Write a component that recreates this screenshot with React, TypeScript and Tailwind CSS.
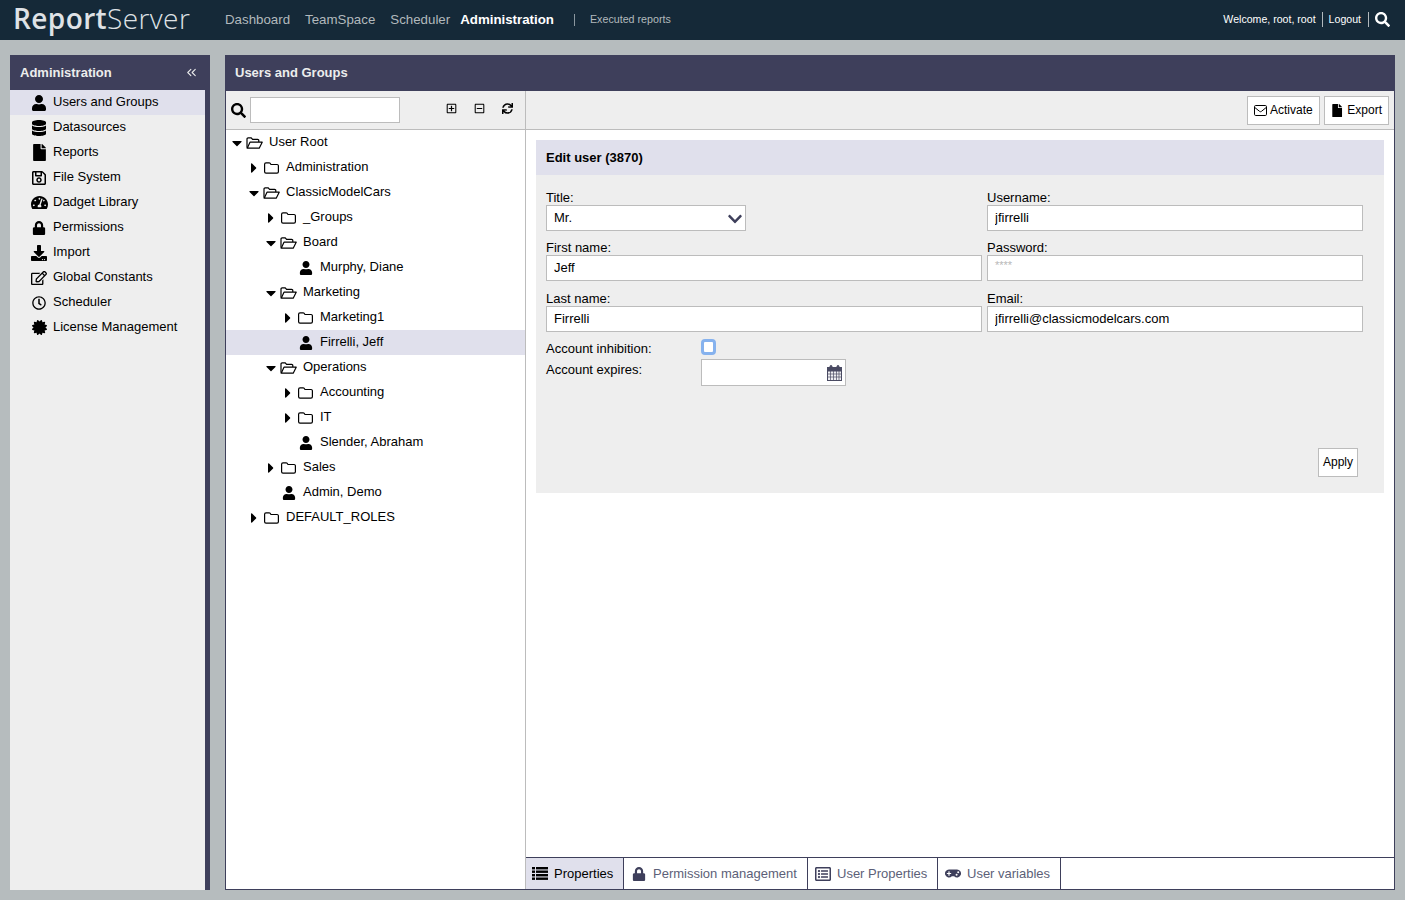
import type { ReactNode } from 'react';
import { ChevronsLeft } from 'lucide-react';
import {
  FaCaretDown,
  FaCaretRight,
  FaCertificate,
  FaChevronDown,
  FaDatabase,
  FaDownload,
  FaFile,
  FaGamepad,
  FaLock,
  FaRegClock,
  FaRegEdit,
  FaRegListAlt,
  FaRegMinusSquare,
  FaRegPlusSquare,
  FaRegSave,
  FaSearch,
  FaSync,
  FaTachometerAlt,
  FaUser,
} from 'react-icons/fa';

const NAV_ITEMS = ['Dashboard', 'TeamSpace', 'Scheduler'];

function FolderClosed() {
  return (
    <svg width="15" height="12" viewBox="0 0 15 12" fill="none" stroke="currentColor" strokeWidth="1.2">
      <path d="M2 .8h3.2a1 1 0 0 1 .8.4l1 1.3h6a1.3 1.3 0 0 1 1.4 1.3v6a1.4 1.4 0 0 1-1.4 1.4H2A1.4 1.4 0 0 1 .6 9.800V2.200A1.400 1.400 0 0 1 2 .8z" />
    </svg>
  );
}

function FolderOpen() {
  return (
    <svg width="17" height="12" viewBox="0 0 17 12" fill="none" stroke="currentColor" strokeWidth="1.2">
      <path d="M1 10.800V2a1.200 1.200 0 0 1 1.200-1.200h3l1.400 1.600h5a1.200 1.200 0 0 1 1.200 1.200v1.500" />
      <path d="M1.200 11.200 4 5.200h12.200l-3 6H1.200z" strokeLinejoin="round" />
    </svg>
  );
}

function ListIcon() {
  return (
    <svg width="16" height="13" viewBox="0 0 16 13" fill="currentColor">
      {[0, 3.5, 7, 10.500].map((y) => (
        <g key={y}>
          <rect x="0" y={y} width="3" height="2.400" />
          <rect x="4" y={y} width="12" height="2.400" />
        </g>
      ))}
    </svg>
  );
}

function CalendarIcon() {
  return (
    <svg width="15" height="16" viewBox="0 0 15 16" fill="none" stroke="#4a4b63" strokeWidth="1">
      <rect x=".5" y="2.500" width="14" height="13" fill="#eeeef2" />
      <rect x=".5" y="2.500" width="14" height="3.500" fill="#4a4b63" />
      <path d="M.5 9h14M.5 12h14M3.500 6v9.500M6.500 6v9.500M9.500 6v9.500M12 6v9.500" strokeWidth=".7" />
      <rect x="3" y=".5" width="2" height="4" rx="1" fill="#4a4b63" />
      <rect x="10" y=".5" width="2" height="4" rx="1" fill="#4a4b63" />
    </svg>
  );
}

function EnvelopeIcon() {
  return (
    <svg width="13" height="11" viewBox="0 0 13 11" fill="none" stroke="currentColor" strokeWidth="1">
      <rect x=".5" y=".5" width="12" height="10" rx="1.200" />
      <path d="M.8 2.500 5.500 6.300a1.500 1.500 0 0 0 2 0l4.700-3.800" />
    </svg>
  );
}

const SIDE_ITEMS: { label: string; icon: ReactNode; active?: boolean }[] = [
  { label: 'Users and Groups', icon: <FaUser size={16} />, active: true },
  { label: 'Datasources', icon: <FaDatabase size={16} /> },
  { label: 'Reports', icon: <FaFile size={17} /> },
  { label: 'File System', icon: <FaRegSave size={16} /> },
  { label: 'Dadget Library', icon: <FaTachometerAlt size={17} /> },
  { label: 'Permissions', icon: <FaLock size={14} /> },
  { label: 'Import', icon: <FaDownload size={16} /> },
  { label: 'Global Constants', icon: <FaRegEdit size={16} /> },
  { label: 'Scheduler', icon: <FaRegClock size={14} /> },
  { label: 'License Management', icon: <FaCertificate size={15} /> },
];

type TreeNode = {
  label: string;
  depth: number;
  kind: 'open' | 'closed' | 'user';
  selected?: boolean;
};

const TREE: TreeNode[] = [
  { label: 'User Root', depth: 0, kind: 'open' },
  { label: 'Administration', depth: 1, kind: 'closed' },
  { label: 'ClassicModelCars', depth: 1, kind: 'open' },
  { label: '_Groups', depth: 2, kind: 'closed' },
  { label: 'Board', depth: 2, kind: 'open' },
  { label: 'Murphy, Diane', depth: 3, kind: 'user' },
  { label: 'Marketing', depth: 2, kind: 'open' },
  { label: 'Marketing1', depth: 3, kind: 'closed' },
  { label: 'Firrelli, Jeff', depth: 3, kind: 'user', selected: true },
  { label: 'Operations', depth: 2, kind: 'open' },
  { label: 'Accounting', depth: 3, kind: 'closed' },
  { label: 'IT', depth: 3, kind: 'closed' },
  { label: 'Slender, Abraham', depth: 3, kind: 'user' },
  { label: 'Sales', depth: 2, kind: 'closed' },
  { label: 'Admin, Demo', depth: 2, kind: 'user' },
  { label: 'DEFAULT_ROLES', depth: 1, kind: 'closed' },
];

const TABS: { label: string; icon: ReactNode; active?: boolean; width: string }[] = [
  { label: 'Properties', icon: <ListIcon />, active: true, width: 'w-[98px] pl-[6px]' },
  { label: 'Permission management', icon: <FaLock size={14} />, width: 'w-[184px] pl-[7px]' },
  { label: 'User Properties', icon: <FaRegListAlt size={16} />, width: 'w-[130px] pl-[7px]' },
  { label: 'User variables', icon: <FaGamepad size={17} />, width: 'w-[123px] pl-[7px]' },
];

function TreeRow({ node }: { node: TreeNode }) {
  return (
    <div
      className={`flex h-[25px] items-center ${node.selected ? 'bg-[#e0e0ec]' : ''}`}
      style={{ paddingLeft: 4 + node.depth * 17 }}
    >
      <span className="flex w-[14px] justify-center">
        {node.kind === 'open' && <FaCaretDown size={16} />}
        {node.kind === 'closed' && <FaCaretRight size={16} />}
      </span>
      <span className="flex w-[21px] justify-center">
        {node.kind === 'open' && <FolderOpen />}
        {node.kind === 'closed' && <FolderClosed />}
        {node.kind === 'user' && <FaUser size={14} />}
      </span>
      <span className="mb-[2px] ml-[4px]">{node.label}</span>
    </div>
  );
}

function Field({ label, value, className = '' }: { label: string; value: string; className?: string }) {
  return (
    <div className={className}>
      <div className="h-[15px] leading-[15px]">{label}</div>
      <input
        readOnly
        value={value}
        className="h-[26px] w-full border border-[#bcbcbc] bg-white px-[7px] pb-[2px] outline-none"
      />
    </div>
  );
}

export default function App() {
  return (
    <div className="flex h-screen flex-col overflow-hidden bg-[#b6bcbe] font-['Liberation_Sans',Arial,sans-serif] text-[13px] text-black">
      <header className="flex h-10 shrink-0 items-center bg-[#152938] px-[15px]">
        <div className="mb-[5px] -ml-[2px] w-[212px] font-['Open_Sans',sans-serif] text-[28px] leading-none tracking-[0.4px] text-[#dfe2e6]">
          <span className="font-semibold">Report</span>
          <span className="font-light">Server</span>
        </div>
        <nav className="flex items-center text-[13.3px] text-[#b2b9bd]">
          {NAV_ITEMS.map((item) => (
            <span key={item} className="mr-[15px]">
              {item}
            </span>
          ))}
          <span className="-ml-[5px] font-bold text-white">Administration</span>
          <span className="mr-[15px] ml-5 h-3 w-px bg-[#8b979f]" />
          <span className="mb-px text-[10.7px] text-[#b2b9bd]">Executed reports</span>
        </nav>
        <div className="ml-auto flex items-center text-[10.6px] text-white">
          <span>Welcome, root, root</span>
          <span className="mx-[6px] h-[15px] w-px bg-[#b2b9bd]" />
          <span>Logout</span>
          <span className="mr-[6px] ml-[7px] h-[15px] w-px bg-[#b2b9bd]" />
          <FaSearch size={15} />
        </div>
      </header>

      <div className="flex min-h-0 flex-1 gap-[15px] px-[10px] pt-[15px] pb-[10px]">
        <aside className="flex w-[200px] shrink-0 flex-col">
          <div className="flex h-[35px] shrink-0 items-center justify-between bg-[#3e3f5b] pr-[11px] pl-[10px] font-bold text-[#eceded]">
            <span>Administration</span>
            <ChevronsLeft size={15} strokeWidth={1.7} className="text-[#eceded]" />
          </div>
          <div className="flex-1 border-r-[5px] border-[#3e3f5b] bg-[#eeeeee]">
            {SIDE_ITEMS.map((item) => (
              <div
                key={item.label}
                className={`flex h-[25px] items-center ${item.active ? 'bg-[#e0e0ec]' : ''}`}
              >
                <span className="ml-[20px] flex w-[18px] justify-center">{item.icon}</span>
                <span className="mb-[2px] ml-[5px]">{item.label}</span>
              </div>
            ))}
          </div>
        </aside>

        <main className="flex min-w-0 flex-1 flex-col border border-[#3e3f5b] bg-white">
          <div className="flex h-[35px] shrink-0 items-center bg-[#3e3f5b] px-[9px] pb-px font-bold text-[#eceded]">
            Users and Groups
          </div>
          <div className="flex min-h-0 flex-1">
            <div className="flex w-[300px] shrink-0 flex-col border-r border-[#bcbcbc]">
              <div className="flex h-[39px] shrink-0 items-center border-b border-[#bcbcbc] bg-[#eeeeee] pr-[12px] pl-[5px]">
                <FaSearch size={15} />
                <input readOnly className="ml-[4px] h-[26px] w-[150px] border border-[#bcbcbc] bg-white outline-none" />
                <div className="mb-1 ml-auto flex items-center gap-[17px]">
                  <FaRegPlusSquare size={11} />
                  <FaRegMinusSquare size={11} />
                  <FaSync size={11} />
                </div>
              </div>
              <div className="flex-1">
                {TREE.map((node) => (
                  <TreeRow key={node.label} node={node} />
                ))}
              </div>
            </div>

            <div className="flex min-w-0 flex-1 flex-col">
              <div className="flex h-[39px] shrink-0 items-center justify-end gap-1 border-b border-[#bcbcbc] bg-[#eeeeee] pr-[5px]">
                <button className="flex h-[29px] w-[73px] items-center gap-[3px] border border-[#bcbcbc] bg-white px-[6px] text-[12px]">
                  <EnvelopeIcon />
                  Activate
                </button>
                <button className="flex h-[29px] w-[65px] items-center gap-[4px] border border-[#bcbcbc] bg-white px-[6px] text-[12px]">
                  <FaFile size={13} />
                  Export
                </button>
              </div>

              <div className="flex-1 px-[10px] pt-[10px]">
                <section className="bg-[#eeeeee]">
                  <h2 className="flex h-[35px] items-center bg-[#e0e0ec] px-[10px] font-bold">Edit user (3870)</h2>
                  <div className="h-[318px] px-[10px] pt-[15px]">
                    <div className="grid grid-cols-[436px_376px] gap-x-[5px]">
                      <div>
                        <div className="h-[15px] leading-[15px]">Title:</div>
                        <div className="flex h-[26px] w-[200px] items-center justify-between border border-[#bcbcbc] bg-white pr-[2px] pb-px pl-[7px]">
                          Mr.
                          <FaChevronDown size={16} className="mt-[2px] text-[#3e3f5b]" />
                        </div>
                      </div>
                      <Field label="Username:" value="jfirrelli" />
                      <Field label="First name:" value="Jeff" className="mt-[9px]" />
                      <div className="mt-[9px]">
                        <div className="h-[15px] leading-[15px]">Password:</div>
                        <div className="h-[26px] border border-[#bcbcbc] bg-white px-[7px] text-[11px] leading-[18px] text-[#b8b8b8]">
                          ****
                        </div>
                      </div>
                      <Field label="Last name:" value="Firrelli" className="mt-[10px]" />
                      <Field label="Email:" value="jfirrelli@classicmodelcars.com" className="mt-[10px]" />
                    </div>

                    <div className="mt-[8px] grid grid-cols-[155px_145px] items-start">
                      <span className="leading-[17px]">Account inhibition:</span>
                      <span className="-mt-px block h-[16px] w-[15px] rounded-[4px] border-[3px] border-[#86b2ee] bg-white" />
                      <span className="mt-[4px] leading-[17px]">Account expires:</span>
                      <div className="mt-[2px] flex h-[27px] items-center justify-end border border-[#bcbcbc] bg-white pr-[3px]">
                        <CalendarIcon />
                      </div>
                    </div>

                    <div className="mt-[62px] flex justify-end pr-[16px]">
                      <button className="h-[29px] w-[40px] border border-[#bcbcbc] bg-white pb-[2px] text-[12px]">
                        Apply
                      </button>
                    </div>
                  </div>
                </section>
              </div>

              <div className="flex h-[32px] shrink-0 border-t border-[#3e3f5b]">
                {TABS.map((tab) => (
                  <div
                    key={tab.label}
                    className={`flex items-center gap-[6px] border-r border-[#3e3f5b] ${tab.width} ${
                      tab.active ? 'bg-[#e0e0ec] text-black' : 'text-[#5c5f78]'
                    }`}
                  >
                    <span className={`flex w-[16px] justify-center ${tab.active ? 'text-black' : 'text-[#3e3f5b]'}`}>
                      {tab.icon}
                    </span>
                    {tab.label}
                  </div>
                ))}
              </div>
            </div>
          </div>
        </main>
      </div>
    </div>
  );
}
